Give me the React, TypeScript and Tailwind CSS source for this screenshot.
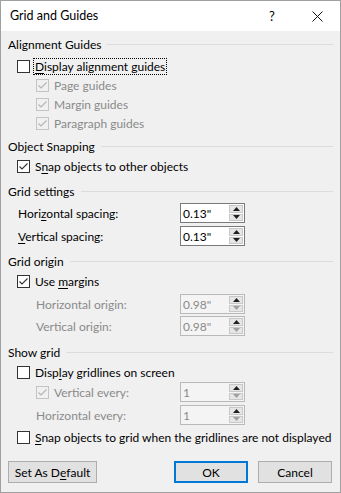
import type { ReactNode } from 'react'

const font = { fontFamily: '"Segoe UI", Lato, sans-serif' }

function Check({ checked, disabled }: { checked?: boolean; disabled?: boolean }) {
  return (
    <span
      className={`flex h-[13px] w-[13px] shrink-0 items-center justify-center border ${
        disabled ? 'border-[#c4c4c4] bg-[#f0f0f0]' : 'border-[#333333] bg-white'
      }`}
    >
      {checked && (
        <svg width="11" height="11" viewBox="0 0 11 11">
          <path
            d="M1.5 5.5 L4 8 L9.5 2.5"
            fill="none"
            stroke={disabled ? '#b4b4b4' : '#333333'}
            strokeWidth="1.1"
          />
        </svg>
      )}
    </span>
  )
}

function Mn({ children }: { children: ReactNode }) {
  return <span className="underline underline-offset-[2px] decoration-1">{children}</span>
}

function Header({ label, mt }: { label: string; mt: string }) {
  return (
    <div className={`flex h-[18px] items-center pt-px ${mt}`}>
      <span className="pr-[6px] text-black">{label}</span>
      <div className="h-px flex-1 bg-[#dcdcdc]" />
    </div>
  )
}

function Spin({ value, disabled }: { value: string; disabled?: boolean }) {
  return (
    <div
      className={`flex h-full w-[65px] border ${
        disabled ? 'border-[#b9b9b9] bg-[#f4f4f4]' : 'border-[#7a7a7a] bg-white'
      }`}
    >
      <span className={`flex flex-1 items-center pl-[2px] pt-px ${disabled ? 'text-[#8a8a8a]' : 'text-black'}`}>
        {value}
      </span>
      <div className="flex w-[16px] flex-col gap-px p-px">
        <div className="flex flex-1 items-center justify-center border border-[#c8c8c8] bg-[#e6e6e6]">
          <svg width="7" height="4" viewBox="0 0 7 4">
            <path d="M0 4 L3.5 0 L7 4 Z" fill="#202020" />
          </svg>
        </div>
        <div className="flex flex-1 items-center justify-center border border-[#c8c8c8] bg-[#e6e6e6]">
          <svg width="7" height="4" viewBox="0 0 7 4">
            <path d="M0 0 L3.5 4 L7 0 Z" fill={disabled ? '#a0a0a0' : '#202020'} />
          </svg>
        </div>
      </div>
    </div>
  )
}

export default function App() {
  return (
    <div
      className="flex h-[493px] w-[341px] flex-col border border-[#a0a0a0] bg-[#f0f0f0] text-[12px] leading-none text-black"
      style={font}
    >
      <div className="flex h-[30px] shrink-0 items-center bg-white pl-[9px]">
        <span className="flex-1 text-[12.5px]">Grid and Guides</span>
        <span className="w-[20px] text-center text-[13px]">?</span>
        <span className="ml-[25px] mr-[13px] flex w-[20px] justify-center">
          <svg width="11" height="11" viewBox="0 0 11 11">
            <path d="M0.5 0.5 L10.5 10.5 M10.5 0.5 L0.5 10.5" stroke="#111" strokeWidth="1" />
          </svg>
        </span>
      </div>

      <div className="flex flex-col px-[7px]">
        <Header label="Alignment Guides" mt="mt-[4px]" />
        <div className="mt-[4px] flex h-[19px] items-center pl-[9px]">
          <Check />
          <span className="ml-[3px] border border-dotted border-black px-[1px] pb-px pt-[2px]">
            <Mn>D</Mn>isplay alignment guides
          </span>
        </div>
        {['Page guides', 'Margin guides', 'Paragraph guides'].map((t) => (
          <div key={t} className="flex h-[19px] items-center pl-[28px]">
            <Check checked disabled />
            <span className="ml-[5px] pt-px text-[#8a8a8a]">{t}</span>
          </div>
        ))}

        <Header label="Object Snapping" mt="mt-[4px]" />
        <div className="mt-[2px] flex h-[19px] items-center pl-[9px]">
          <Check checked />
          <span className="ml-[5px] pt-px">
            S<Mn>n</Mn>ap objects to other objects
          </span>
        </div>

        <Header label="Grid settings" mt="mt-[6px]" />
        <div className="mt-[3px] flex h-[20px] items-center pl-[10px]">
          <span className="flex-1 pt-px">
            Hori<Mn>z</Mn>ontal spacing:
          </span>
          <span className="mr-[88px] h-full">
            <Spin value={'0.13"'} />
          </span>
        </div>
        <div className="mt-[3px] flex h-[20px] items-center pl-[10px]">
          <span className="flex-1 pt-px">
            <Mn>V</Mn>ertical spacing:
          </span>
          <span className="mr-[88px] h-full">
            <Spin value={'0.13"'} />
          </span>
        </div>

        <Header label="Grid origin" mt="mt-[6px]" />
        <div className="mt-[2px] flex h-[19px] items-center pl-[9px]">
          <Check checked />
          <span className="ml-[5px] pt-px">
            Use <Mn>m</Mn>argins
          </span>
        </div>
        <div className="mt-[3px] flex h-[20px] items-center pl-[28px]">
          <span className="flex-1 pt-px text-[#8a8a8a]">Horizontal origin:</span>
          <span className="mr-[88px] h-full">
            <Spin value={'0.98"'} disabled />
          </span>
        </div>
        <div className="mt-[2px] flex h-[20px] items-center pl-[28px]">
          <span className="flex-1 pt-px text-[#8a8a8a]">Vertical origin:</span>
          <span className="mr-[88px] h-full">
            <Spin value={'0.98"'} disabled />
          </span>
        </div>

        <Header label="Show grid" mt="mt-[7px]" />
        <div className="mt-[2px] flex h-[19px] items-center pl-[9px]">
          <Check />
          <span className="ml-[5px] pt-px">
            Disp<Mn>l</Mn>ay gridlines on screen
          </span>
        </div>
        <div className="flex h-[20px] items-center pl-[28px]">
          <Check checked disabled />
          <span className="ml-[5px] flex-1 pt-px text-[#8a8a8a]">Vertical every:</span>
          <span className="mr-[88px] h-full">
            <Spin value="1" disabled />
          </span>
        </div>
        <div className="mt-[3px] flex h-[20px] items-center pl-[28px]">
          <span className="flex-1 pt-px text-[#8a8a8a]">Horizontal every:</span>
          <span className="mr-[88px] h-full">
            <Spin value="1" disabled />
          </span>
        </div>
        <div className="mt-[3px] flex h-[19px] items-center pl-[9px]">
          <Check />
          <span className="ml-[5px] whitespace-nowrap pt-px">
            <Mn>S</Mn>nap objects to grid when the gridlines are not displayed
          </span>
        </div>

        <div className="mt-[14px] flex h-[22px] items-stretch">
          <button className="flex w-[89px] items-center justify-center border border-[#adadad] bg-[#e1e1e1] pt-px">
            Set As D<Mn>e</Mn>fault
          </button>
          <div className="flex-1" />
          <button className="flex w-[74px] items-center justify-center border-2 border-[#0078d7] bg-[#e1e1e1] pt-px">
            OK
          </button>
          <button className="ml-[10px] flex w-[74px] items-center justify-center border border-[#adadad] bg-[#e1e1e1] pt-px">
            Cancel
          </button>
          <div className="w-[1px]" />
        </div>
      </div>
    </div>
  )
}
